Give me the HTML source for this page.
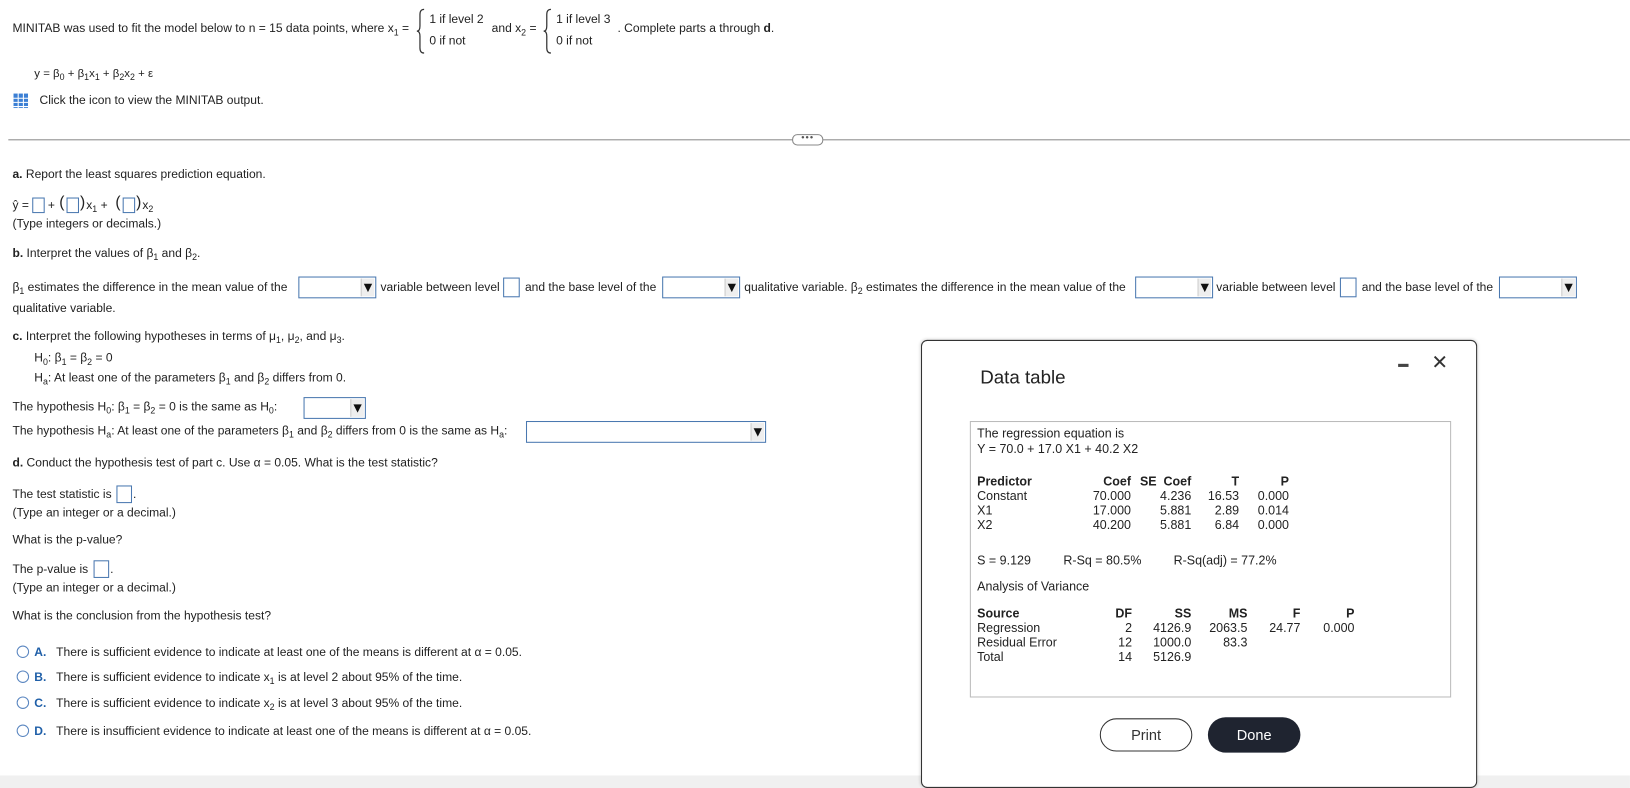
<!DOCTYPE html>
<html><head><meta charset="utf-8"><style>
html,body{margin:0;padding:0;background:#fff;overflow:hidden;width:1630px;height:786px}
#w{position:absolute;left:0;top:0;width:1568px;height:756px;transform:scale(1.0395);transform-origin:0 0;font-family:"Liberation Sans",Arial,sans-serif;font-size:11.6px;color:#222}
.t{position:absolute;white-space:nowrap;line-height:14px}
sub{font-size:8.5px;vertical-align:-3px;line-height:0}
.dd{position:absolute;height:21px;border:1px solid #4a78b0;background:#fff;box-sizing:border-box}
.dd:after{content:"";position:absolute;right:1px;top:1px;width:12px;height:17px;background:#eee;border-left:1px solid #ccc}
.dd i{position:absolute;right:3px;top:6px;width:0;height:0;border-left:4px solid transparent;border-right:4px solid transparent;border-top:8px solid #111;z-index:2}
.bx{position:absolute;border:1px solid #4a78b0;background:#fff;box-sizing:border-box}
.rad{position:absolute;width:12px;height:12px;border:1px solid #5a86c0;border-radius:50%;box-sizing:border-box}
b{font-weight:bold}
.r{text-align:right}
</style></head><body><div id="w">

<div class="t" style="left:12px;top:21px">MINITAB was used to fit the model below to n = 15 data points, where x<sub>1</sub> =</div>
<svg style="position:absolute;left:400px;top:8px" width="10" height="44"><path d="M8 1 Q4 1 4 6 L4 17 Q4 22 1 22 Q4 22 4 27 L4 38 Q4 43 8 43" fill="none" stroke="#333" stroke-width="1.2"/></svg>
<div class="t" style="left:413px;top:12px">1 if level 2</div>
<div class="t" style="left:413px;top:33px">0 if not</div>
<div class="t" style="left:473px;top:21px">and x<sub>2</sub> =</div>
<svg style="position:absolute;left:522px;top:8px" width="10" height="44"><path d="M8 1 Q4 1 4 6 L4 17 Q4 22 1 22 Q4 22 4 27 L4 38 Q4 43 8 43" fill="none" stroke="#333" stroke-width="1.2"/></svg>
<div class="t" style="left:535px;top:12px">1 if level 3</div>
<div class="t" style="left:535px;top:33px">0 if not</div>
<div class="t" style="left:594px;top:21px">. Complete parts a through <b>d</b>.</div>

<div class="t" style="left:33px;top:64px;font-size:11px">y = β<sub>0</sub> + β<sub>1</sub>x<sub>1</sub> + β<sub>2</sub>x<sub>2</sub> + ε</div>
<svg style="position:absolute;left:13px;top:90px" width="14" height="14"><rect x="0" y="0" width="14" height="14" fill="#3b7fd4"/><g stroke="#fff" stroke-width="1"><line x1="0" y1="4.5" x2="14" y2="4.5"/><line x1="0" y1="8.5" x2="14" y2="8.5"/><line x1="0" y1="12.5" x2="14" y2="12.5"/><line x1="4.5" y1="0" x2="4.5" y2="14"/><line x1="9.5" y1="0" x2="9.5" y2="14"/></g></svg>
<div class="t" style="left:38px;top:90px">Click the icon to view the MINITAB output.</div>

<div style="position:absolute;left:8px;top:134px;width:1560px;height:1px;background:#8a8a8a"></div>
<div style="position:absolute;left:762px;top:129px;width:28px;height:9px;border:1px solid #888;border-radius:5px;background:#fff;font-size:9px;line-height:5px;text-align:center;color:#555;letter-spacing:1px">•••</div>

<div class="t" style="left:12px;top:161px"><b>a.</b> Report the least squares prediction equation.</div>
<div class="t" style="left:12px;top:191px">ŷ =</div>
<div class="bx" style="left:31px;top:190px;width:12px;height:15px"></div>
<div class="t" style="left:46px;top:191px">+</div>
<div class="t" style="left:57px;top:188px;font-size:15px">(</div>
<div class="bx" style="left:64px;top:190px;width:12px;height:15px"></div>
<div class="t" style="left:77px;top:188px;font-size:15px">)</div>
<div class="t" style="left:83px;top:191px">x<sub>1</sub> +</div>
<div class="t" style="left:111px;top:188px;font-size:15px">(</div>
<div class="bx" style="left:118px;top:190px;width:12px;height:15px"></div>
<div class="t" style="left:131px;top:188px;font-size:15px">)</div>
<div class="t" style="left:137px;top:191px">x<sub>2</sub></div>
<div class="t" style="left:12px;top:209px">(Type integers or decimals.)</div>

<div class="t" style="left:12px;top:237px"><b>b.</b> Interpret the values of β<sub>1</sub> and β<sub>2</sub>.</div>

<div class="t" style="left:12px;top:270px">β<sub>1</sub> estimates the difference in the mean value of the</div>
<div class="dd" style="left:287px;top:266px;width:75px"><i></i></div>
<div class="t" style="left:366px;top:270px">variable between level</div>
<div class="bx" style="left:484px;top:267px;width:16px;height:19px"></div>
<div class="t" style="left:505px;top:270px">and the base level of the</div>
<div class="dd" style="left:637px;top:266px;width:75px"><i></i></div>
<div class="t" style="left:716px;top:270px">qualitative variable. β<sub>2</sub> estimates the difference in the mean value of the</div>
<div class="dd" style="left:1092px;top:266px;width:75px"><i></i></div>
<div class="t" style="left:1170px;top:270px">variable between level</div>
<div class="bx" style="left:1289px;top:267px;width:16px;height:19px"></div>
<div class="t" style="left:1310px;top:270px">and the base level of the</div>
<div class="dd" style="left:1442px;top:266px;width:75px"><i></i></div>
<div class="t" style="left:12px;top:290px">qualitative variable.</div>

<div class="t" style="left:12px;top:317px"><b>c.</b> Interpret the following hypotheses in terms of μ<sub>1</sub>, μ<sub>2</sub>, and μ<sub>3</sub>.</div>
<div class="t" style="left:33px;top:338px">H<sub>0</sub>: β<sub>1</sub> = β<sub>2</sub> = 0</div>
<div class="t" style="left:33px;top:357px">H<sub>a</sub>: At least one of the parameters β<sub>1</sub> and β<sub>2</sub> differs from 0.</div>
<div class="t" style="left:12px;top:385px">The hypothesis H<sub>0</sub>: β<sub>1</sub> = β<sub>2</sub> = 0 is the same as H<sub>0</sub>:</div>
<div class="dd" style="left:292px;top:382px;width:60px"><i></i></div>
<div class="t" style="left:12px;top:408px">The hypothesis H<sub>a</sub>: At least one of the parameters β<sub>1</sub> and β<sub>2</sub> differs from 0 is the same as H<sub>a</sub>:</div>
<div class="dd" style="left:506px;top:405px;width:231px"><i></i></div>

<div class="t" style="left:12px;top:439px"><b>d.</b> Conduct the hypothesis test of part c. Use α = 0.05. What is the test statistic?</div>
<div class="t" style="left:12px;top:469px">The test statistic is</div>
<div class="bx" style="left:112px;top:467px;width:15px;height:17px"></div>
<div class="t" style="left:128px;top:469px">.</div>
<div class="t" style="left:12px;top:487px">(Type an integer or a decimal.)</div>
<div class="t" style="left:12px;top:513px">What is the p-value?</div>
<div class="t" style="left:12px;top:541px">The p-value is</div>
<div class="bx" style="left:90px;top:539px;width:15px;height:17px"></div>
<div class="t" style="left:106px;top:541px">.</div>
<div class="t" style="left:12px;top:559px">(Type an integer or a decimal.)</div>
<div class="t" style="left:12px;top:586px">What is the conclusion from the hypothesis test?</div>

<div class="rad" style="left:16px;top:621px"></div><div class="t" style="left:33px;top:621px"><b style="color:#1f5fa8">A.</b>&nbsp;&nbsp; There is sufficient evidence to indicate at least one of the means is different at α = 0.05.</div>
<div class="rad" style="left:16px;top:645px"></div><div class="t" style="left:33px;top:645px"><b style="color:#1f5fa8">B.</b>&nbsp;&nbsp; There is sufficient evidence to indicate x<sub>1</sub> is at level 2 about 95% of the time.</div>
<div class="rad" style="left:16px;top:670px"></div><div class="t" style="left:33px;top:670px"><b style="color:#1f5fa8">C.</b>&nbsp;&nbsp; There is sufficient evidence to indicate x<sub>2</sub> is at level 3 about 95% of the time.</div>
<div class="rad" style="left:16px;top:697px"></div><div class="t" style="left:33px;top:697px"><b style="color:#1f5fa8">D.</b>&nbsp;&nbsp; There is insufficient evidence to indicate at least one of the means is different at α = 0.05.</div>

<div style="position:absolute;left:0;top:746px;width:1568px;height:12px;background:#f0f0f0"></div>

<div style="position:absolute;left:886px;top:327px;width:535px;height:431px;border:1px solid #333;border-radius:6px;background:#fff;box-sizing:border-box;box-shadow:0 0 3px rgba(0,0,0,.2);font-size:12px">
  <div class="t" style="left:56px;top:25px;font-size:18px;line-height:20px;color:#222">Data table</div>
  <div style="position:absolute;left:458px;top:22px;width:10px;height:3px;background:#444"></div>
  <div class="t" style="left:490px;top:12px;font-size:19px;line-height:20px;color:#333">✕</div>
  <div style="position:absolute;left:46px;top:77px;width:463px;height:266px;border:1px solid #bbb;box-sizing:border-box">
    <div class="t" style="left:6px;top:4px">The regression equation is</div>
    <div class="t" style="left:6px;top:19px">Y = 70.0 + 17.0 X1 + 40.2 X2</div>
    <div class="t" style="left:6px;top:50px"><b>Predictor</b><br>Constant<br>X1<br>X2</div>
    <div class="t r" style="left:90px;top:50px;width:64px"><b>Coef</b><br>70.000<br>17.000<br>40.200</div>
    <div class="t r" style="left:150px;top:50px;width:62px"><b>SE&nbsp; Coef</b><br>4.236<br>5.881<br>5.881</div>
    <div class="t r" style="left:210px;top:50px;width:48px"><b>T</b><br>16.53<br>2.89<br>6.84</div>
    <div class="t r" style="left:260px;top:50px;width:46px"><b>P</b><br>0.000<br>0.014<br>0.000</div>
    <div class="t" style="left:6px;top:126px">S = 9.129</div>
    <div class="t" style="left:89px;top:126px">R-Sq = 80.5%</div>
    <div class="t" style="left:195px;top:126px">R-Sq(adj) = 77.2%</div>
    <div class="t" style="left:6px;top:151px">Analysis of Variance</div>
    <div class="t" style="left:6px;top:177px"><b>Source</b><br>Regression<br>Residual Error<br>Total</div>
    <div class="t r" style="left:110px;top:177px;width:45px"><b>DF</b><br>2<br>12<br>14</div>
    <div class="t r" style="left:150px;top:177px;width:62px"><b>SS</b><br>4126.9<br>1000.0<br>5126.9</div>
    <div class="t r" style="left:210px;top:177px;width:56px"><b>MS</b><br>2063.5<br>83.3</div>
    <div class="t r" style="left:270px;top:177px;width:47px"><b>F</b><br>24.77</div>
    <div class="t r" style="left:320px;top:177px;width:49px"><b>P</b><br>0.000</div>
  </div>
  <div style="position:absolute;left:171px;top:363px;width:89px;height:32px;border:1px solid #333;border-radius:16px;box-sizing:border-box;text-align:center;line-height:30px;font-size:14px;color:#333">Print</div>
  <div style="position:absolute;left:275px;top:362px;width:89px;height:34px;border-radius:17px;background:#1f2430;text-align:center;line-height:34px;font-size:14px;color:#fff">Done</div>
</div>
</div></body></html>
